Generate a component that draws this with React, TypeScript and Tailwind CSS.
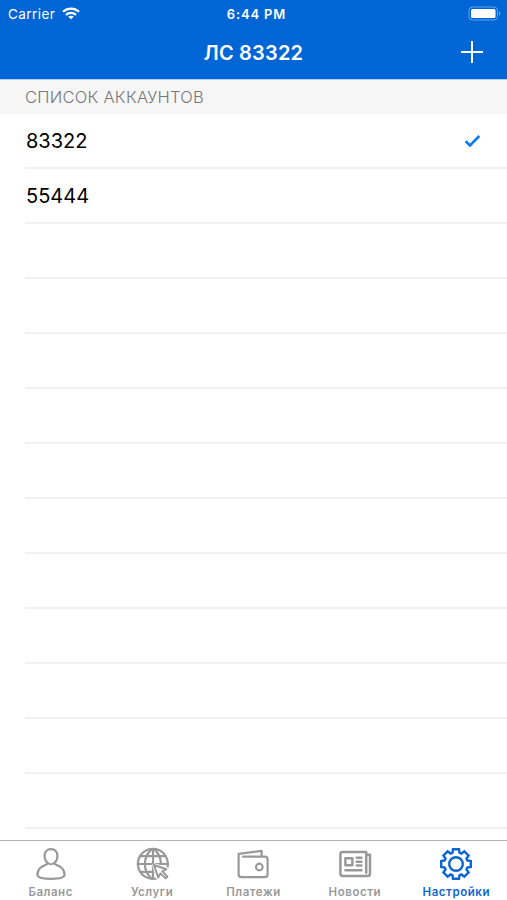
import { useState, type ReactNode } from 'react'

interface TabItem {
  id: string
  label: string
  icon: ReactNode
}

const ACCOUNTS = ['83322', '55444']
const ROW_COUNT = 13

function gearPath(): string {
  const tooth = [
    [-3.5, -11.3],
    [-3, -14.8],
    [3, -14.8],
    [3.5, -11.3],
  ]
  const points: string[] = []
  for (let i = 0; i < 8; i++) {
    const a = (i * Math.PI) / 4
    for (const [x, y] of tooth) {
      const px = x * Math.cos(a) - y * Math.sin(a)
      const py = x * Math.sin(a) + y * Math.cos(a)
      points.push(`${px.toFixed(2)} ${py.toFixed(2)}`)
    }
  }
  return `M${points.join('L')}Z`
}

const iconProps = {
  width: 34,
  height: 34,
  viewBox: '-17 -17 34 34',
  fill: 'none',
  stroke: 'currentColor',
  strokeWidth: 2.2,
  strokeLinejoin: 'round' as const,
  strokeLinecap: 'round' as const,
}

const TABS: TabItem[] = [
  {
    id: 'balance',
    label: 'Баланс',
    icon: (
      <svg {...iconProps}>
        <path d="M-3 -.8C-5.2 -2.4 -6.4 -4.7 -6.4 -8C-6.4 -12 -3.9 -14.8 0 -14.8S6.4 -12 6.4 -8C6.4 -4.7 5.2 -2.4 3 -.8C4.8 1.2 8.2 1.8 10.8 4C13 6 13.5 8.2 13.6 10.8C13.6 13.6 7 14.8 0 14.8S-13.6 13.6 -13.6 10.8C-13.5 8.2 -13 6 -10.8 4C-8.2 1.8 -4.8 1.2 -3 -.8C-1.4 .4 1.4 .4 3 -.8" />
      </svg>
    ),
  },
  {
    id: 'services',
    label: 'Услуги',
    icon: (
      <svg {...iconProps} className="translate-x-px">
        <path d="M14.2 4.3A15 15 0 1 0 4.3 14.2" />
        <path d="M0 -14.8V14.8M-14.8 0H14.8M-12.5 -7.8H12.5M-12.5 7.8H4" />
        <path d="M-1 -14.8C-10.5 -7 -10.5 7 -1 14.8M1 -14.8C6 -10.5 8 -6 8 0" />
        <path d="M1.6 1.6L13.4 5.2L9 7.4L14 12.4L12.4 14L7.4 9L5.2 13.4Z" fill="#fff" stroke="#fff" strokeWidth="4.4" />
        <path d="M1 1L13.4 5.2L9.4 7.4L14.4 12.6L12.6 14.4L7.4 9.4L5.2 13.4Z" fill="#fff" strokeWidth="2" />
      </svg>
    ),
  },
  {
    id: 'payments',
    label: 'Платежи',
    icon: (
      <svg {...iconProps}>
        <path d="M-10 -7.4H11.8Q14.6 -7.4 14.6 -4.6V10.3Q14.6 13.1 11.8 13.1H-11.6Q-14.4 13.1 -14.4 10.3V-10.2L8.6 -13.1V-7.7" />
        <circle cx="6.3" cy="3" r="3.3" />
      </svg>
    ),
  },
  {
    id: 'news',
    label: 'Новости',
    icon: (
      <svg {...iconProps} strokeWidth={2.5}>
        <path d="M11.2 8.8V-12H-12.5Q-14.6 -12 -14.6 -9.9V9.5Q-14.6 12 -12.1 12H12.4Q15 12 15 9.4V-9.2H11.2" />
        <path d="M-9.6 -5.8H-2.6V1.2H-9.6ZM1.8 -6.2H6.4M1.8 -2.3H6.4M1.8 1.6H6.4M-9.6 6.2H6.4" />
      </svg>
    ),
  },
  {
    id: 'settings',
    label: 'Настройки',
    icon: (
      <svg {...iconProps} strokeWidth={2.4} strokeLinejoin="miter">
        <path d={gearPath()} />
        <circle r="6.8" />
      </svg>
    ),
  },
]

function StatusBar() {
  return (
    <div className="grid h-[29px] grid-cols-[1fr_auto_1fr] items-center pl-2 pr-1.5 text-[13px]">
      <div className="flex items-center gap-[7px]">
        <span className="-mt-px text-[13.5px] tracking-[0.45px]">Carrier</span>
        <svg className="-mt-[3px]" width="18" height="13" viewBox="0 0 18 13" fill="none" stroke="white" strokeWidth="2.2">
          <path d="M1 4.7C5.6 .5 12.4 .5 17 4.7M4 7.9C6.8 5.3 11.2 5.3 14 7.9" />
          <path d="M9 12.3L6.2 9.7C7.8 8.3 10.2 8.3 11.8 9.7Z" fill="white" stroke="none" />
        </svg>
      </div>
      <span className="pl-1 text-center font-semibold tracking-[0.85px]">6:44 PM</span>
      <svg className="-mt-[3px] justify-self-end" width="33" height="15" viewBox="0 0 33 15">
        <rect x="1" y="1" width="28.5" height="13" rx="3.5" fill="none" stroke="#66a3e8" />
        <rect x="3" y="3" width="24.5" height="9" rx="1.6" fill="white" />
        <path d="M31 5.3Q32.5 6 32.5 7.5T31 9.7Z" fill="#66a3e8" />
      </svg>
    </div>
  )
}

export default function App() {
  const [account, setAccount] = useState<string>(ACCOUNTS[0])
  const [activeTab, setActiveTab] = useState<string>('settings')

  return (
    <div className="flex h-[900px] w-[507px] flex-col overflow-hidden bg-white font-['Inter','Liberation_Sans',sans-serif]">
      <header className="h-20 shrink-0 border-b border-[#a9cdf3] bg-[#0066d6] text-white">
        <StatusBar />
        <div className="grid h-[47px] grid-cols-[1fr_auto_1fr] items-center pr-6">
          <h1 className="col-start-2 pl-6 text-xl font-semibold tracking-[0.2px]">ЛС {account}</h1>
          <button className="-mt-px justify-self-end" aria-label="Добавить">
            <svg width="22" height="22" viewBox="0 0 22 22" stroke="white" strokeWidth="2">
              <path d="M11 0V22M0 11H22" />
            </svg>
          </button>
        </div>
      </header>

      <main className="flex-1 overflow-hidden">
        <h2 className="flex h-[34px] items-center bg-[#f6f6f6] pl-[25px] text-[16.5px] font-light tracking-[0.25px] text-[#77777b]">
          СПИСОК АККАУНТОВ
        </h2>
        <ul className="pl-[25px]">
          {Array.from({ length: ROW_COUNT }, (_, i) => (
            <li
              key={i}
              onClick={() => ACCOUNTS[i] && setAccount(ACCOUNTS[i])}
              className="flex h-[55px] items-center justify-between border-b-2 border-[#f1f1f2] pl-px pr-[26px] pt-px text-xl text-black"
            >
              <span>{ACCOUNTS[i]}</span>
              {ACCOUNTS[i] === account && (
                <svg width="17" height="14" viewBox="0 0 17 14" fill="none" stroke="#0a7aee" strokeWidth="2.6">
                  <path d="M1.6 7.2L6 11.5L15.3 2" />
                </svg>
              )}
            </li>
          ))}
        </ul>
      </main>

      <nav className="grid h-[60px] shrink-0 grid-cols-5 border-t border-[#b2b2b2]">
        {TABS.map((t) => (
          <button
            key={t.id}
            onClick={() => setActiveTab(t.id)}
            className={`flex flex-col items-center pt-1.5 ${t.id === activeTab ? 'text-[#0b66d2]' : 'text-[#999999]'}`}
          >
            {t.icon}
            <span className="mt-[3px] text-[11.5px] font-semibold leading-4 tracking-[0.55px]">{t.label}</span>
          </button>
        ))}
      </nav>
    </div>
  )
}
